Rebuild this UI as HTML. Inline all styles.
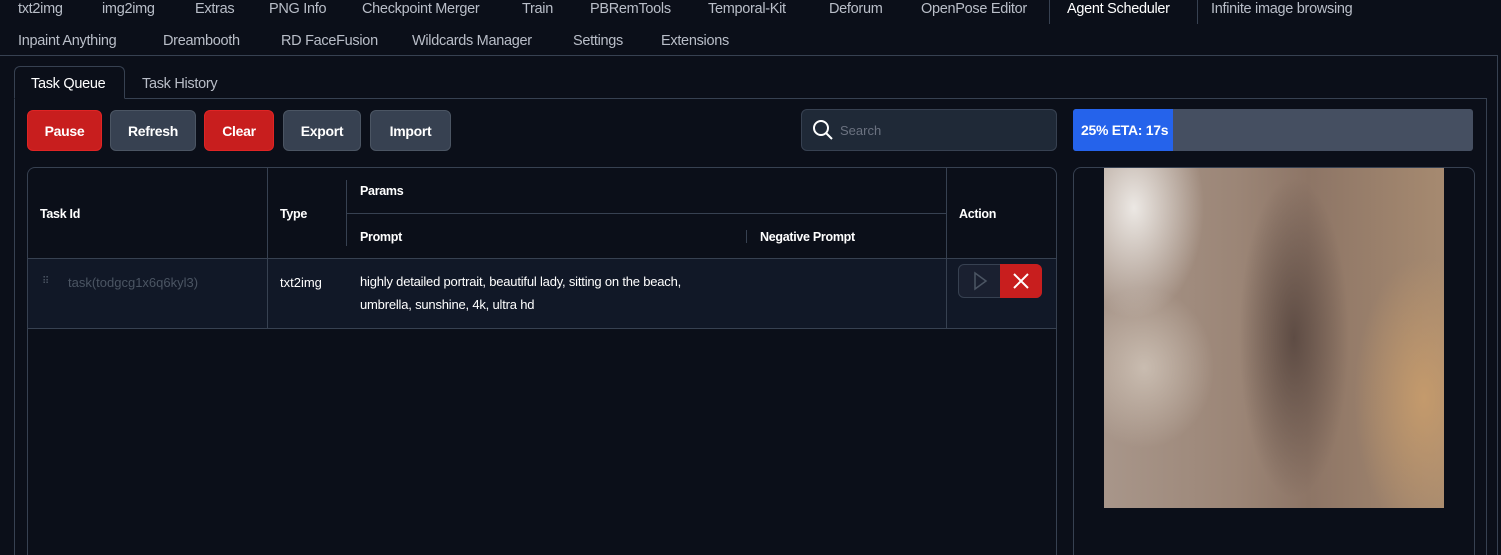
<!DOCTYPE html>
<html><head><style>
*{box-sizing:border-box;margin:0;padding:0}
html,body{width:1501px;height:555px;overflow:hidden}
body{background:#0b0f19;font-family:"Liberation Sans",sans-serif;color:#d1d5db;position:relative;font-size:14px}
.a{position:absolute;white-space:nowrap}
.nav{font-size:14.5px;color:#b9bec8;letter-spacing:-0.3px}
.btn{position:absolute;top:110px;height:41px;border-radius:6px;color:#fff;font-weight:bold;font-size:14px;display:flex;align-items:center;justify-content:center;letter-spacing:-0.3px}
.red{background:#c81e1e;border:1px solid #e02424}
.gray{background:#374151;border:1px solid #4b5563}
.th{font-weight:bold;font-size:12.5px;color:#fff;letter-spacing:-0.3px}
.vl{position:absolute;background:#374151;width:1px}
.hl{position:absolute;background:#374151;height:1px}
</style></head><body>
<div class="a nav" style="left:18px;top:1px">txt2img</div>
<div class="a nav" style="left:102px;top:1px">img2img</div>
<div class="a nav" style="left:195px;top:1px">Extras</div>
<div class="a nav" style="left:269px;top:1px">PNG Info</div>
<div class="a nav" style="left:362px;top:1px">Checkpoint Merger</div>
<div class="a nav" style="left:522px;top:1px">Train</div>
<div class="a nav" style="left:590px;top:1px">PBRemTools</div>
<div class="a nav" style="left:708px;top:1px">Temporal-Kit</div>
<div class="a nav" style="left:829px;top:1px">Deforum</div>
<div class="a nav" style="left:921px;top:1px">OpenPose Editor</div>
<div class="vl" style="left:1049px;top:0;height:24px"></div>
<div class="a nav" style="left:1067px;top:1px;color:#fff">Agent Scheduler</div>
<div class="vl" style="left:1197px;top:0;height:24px"></div>
<div class="a nav" style="left:1211px;top:1px">Infinite image browsing</div>
<div class="a nav" style="left:18px;top:33px">Inpaint Anything</div>
<div class="a nav" style="left:163px;top:33px">Dreambooth</div>
<div class="a nav" style="left:281px;top:33px">RD FaceFusion</div>
<div class="a nav" style="left:412px;top:33px">Wildcards Manager</div>
<div class="a nav" style="left:573px;top:33px">Settings</div>
<div class="a nav" style="left:661px;top:33px">Extensions</div>
<div class="hl" style="left:0;top:55px;width:1497px"></div>
<div class="vl" style="left:1497px;top:55px;height:500px"></div>
<div class="a" style="left:14px;top:98px;width:1473px;height:457px;border:1px solid #374151;border-bottom:none"></div>
<div class="a" style="left:14px;top:66px;width:111px;height:33px;border:1px solid #374151;border-bottom:1px solid #0b0f19;border-radius:6px 6px 0 0;background:#0b0f19"></div>
<div class="a nav" style="left:31px;top:76px;color:#fff">Task Queue</div>
<div class="a nav" style="left:142px;top:76px">Task History</div>
<div class="btn red" style="left:27px;width:75px">Pause</div>
<div class="btn gray" style="left:110px;width:86px">Refresh</div>
<div class="btn red" style="left:204px;width:70px">Clear</div>
<div class="btn gray" style="left:283px;width:78px">Export</div>
<div class="btn gray" style="left:370px;width:81px">Import</div>
<div class="a" style="left:801px;top:109px;width:256px;height:42px;border:1px solid #374151;border-radius:6px;background:#1f2937"></div>
<svg class="a" style="left:812px;top:119px" width="22" height="22" viewBox="0 0 22 22"><circle cx="9" cy="9" r="7" fill="none" stroke="#fff" stroke-width="2"/><path d="M14 14l6 6" stroke="#fff" stroke-width="2"/></svg>
<div class="a" style="left:840px;top:123px;font-size:13px;color:#6b7280">Search</div>
<div class="a" style="left:1073px;top:109px;width:400px;height:42px;background:#454f61;border-radius:3px"></div>
<div class="a" style="left:1073px;top:109px;width:100px;height:42px;background:#2563eb;border-radius:3px 0 0 3px"></div>
<div class="a" style="left:1081px;top:122px;font-weight:bold;color:#fff;font-size:14px;letter-spacing:-0.3px">25% ETA: 17s</div>
<div class="a" style="left:27px;top:167px;width:1030px;height:388px;border:1px solid #374151;border-bottom:none;border-radius:8px 8px 0 0"></div>
<div class="a" style="left:28px;top:259px;width:1028px;height:69px;background:#111827"></div>
<div class="hl" style="left:28px;top:258px;width:1028px"></div>
<div class="hl" style="left:28px;top:328px;width:1028px"></div>
<div class="hl" style="left:347px;top:213px;width:600px"></div>
<div class="vl" style="left:267px;top:168px;height:160px"></div>
<div class="vl" style="left:946px;top:168px;height:160px"></div>
<div class="vl" style="left:346px;top:180px;height:66px"></div>
<div class="vl" style="left:746px;top:230px;height:13px"></div>
<div class="a th" style="left:40px;top:207px">Task Id</div>
<div class="a th" style="left:280px;top:207px">Type</div>
<div class="a th" style="left:360px;top:184px">Params</div>
<div class="a th" style="left:360px;top:230px">Prompt</div>
<div class="a th" style="left:760px;top:230px">Negative Prompt</div>
<div class="a th" style="left:959px;top:207px">Action</div>
<div class="a" style="left:42px;top:276px;color:#4b5563;font-size:10px">⠿</div>
<div class="a" style="left:68px;top:275px;color:#4b5563;font-size:13px">task(todgcg1x6q6kyl3)</div>
<div class="a" style="left:280px;top:275px;color:#fff;font-size:13px">txt2img</div>
<div class="a" style="left:360px;top:270px;color:#fff;font-size:13px;line-height:23px;letter-spacing:-0.2px">highly detailed portrait, beautiful lady, sitting on the beach,<br>umbrella, sunshine, 4k, ultra hd</div>
<div class="a" style="left:958px;top:264px;width:84px;height:34px;border:1px solid #374151;border-radius:6px;background:#1a2030"></div>
<svg class="a" style="left:970px;top:271px" width="20" height="20" viewBox="0 0 20 20"><path d="M5 2l11 8-11 8z" fill="none" stroke="#4b5563" stroke-width="1.5"/></svg>
<div class="a" style="left:1000px;top:264px;width:42px;height:34px;background:#c81e1e;border-radius:0 6px 6px 0"></div>
<svg class="a" style="left:1012px;top:272px" width="18" height="18" viewBox="0 0 18 18"><path d="M2 2l14 14M16 2L2 16" stroke="#fff" stroke-width="2"/></svg>
<div class="a" style="left:1073px;top:167px;width:402px;height:388px;border:1px solid #374151;border-bottom:none;border-radius:8px 8px 0 0"></div>
<div class="a" style="left:1104px;top:168px;width:340px;height:340px;background:
radial-gradient(ellipse 55px 160px at 190px 170px,#5e4c44 0%,rgba(94,76,68,0) 100%),
radial-gradient(ellipse 70px 110px at 30px 40px,#ece8e4 0%,rgba(236,232,228,0) 100%),
radial-gradient(ellipse 70px 80px at 40px 200px,#c9bcb0 0%,rgba(201,188,176,0) 100%),
radial-gradient(ellipse 70px 140px at 320px 230px,#c49a6c 0%,rgba(196,154,108,0) 100%),
linear-gradient(90deg,#a8968a 0%,#9b8576 40%,#8d7566 60%,#a68a70 100%)"></div>
</body></html>
